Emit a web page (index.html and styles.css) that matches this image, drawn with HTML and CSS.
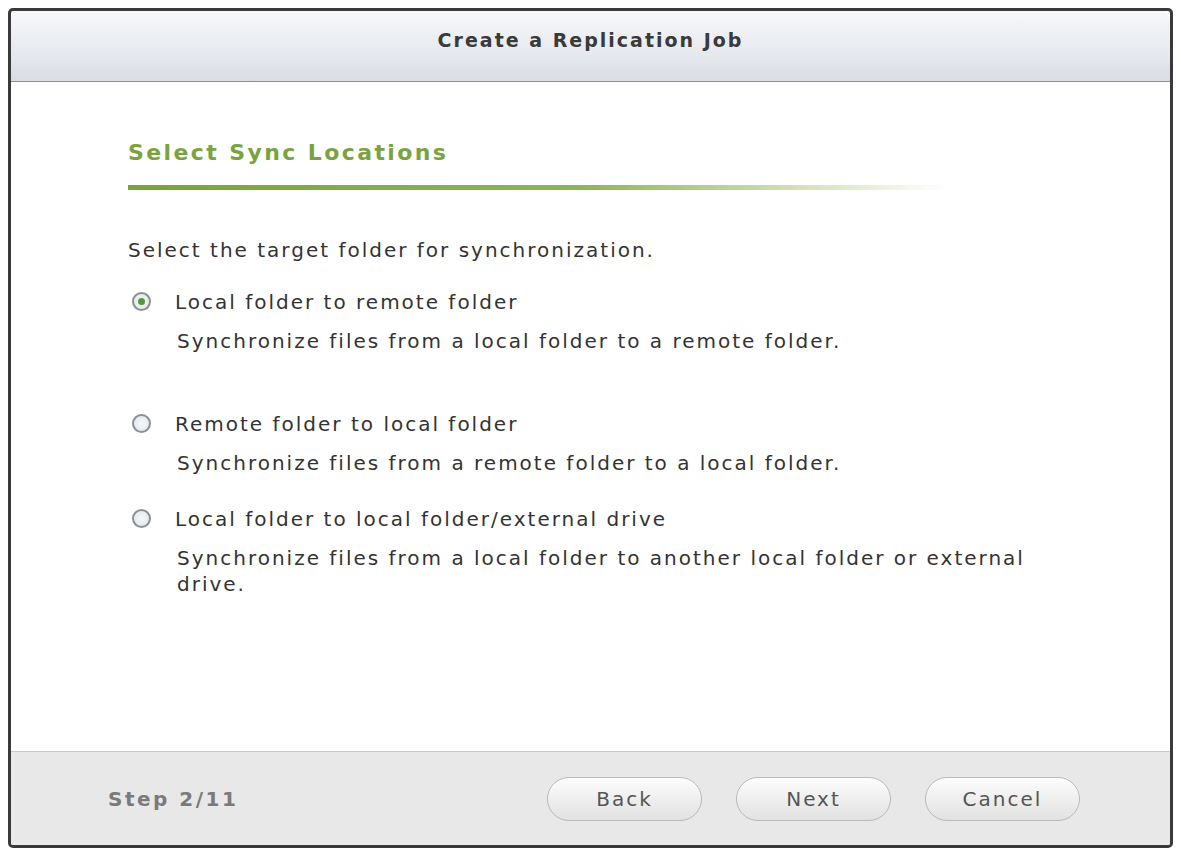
FILE: index.html
```html
<!DOCTYPE html>
<html lang="en">
<head>
    <meta charset="UTF-8">
    <title>Create a Replication Job</title>
    <link rel="stylesheet" href="styles.css">
</head>
<body>
    <div class="window">
        <div class="titlebar">Create a Replication Job</div>
        <div class="content">
            <h2 class="section-title">Select Sync Locations</h2>
            <div class="section-rule"></div>
            <p class="intro">Select the target folder for synchronization.</p>

            <div class="options">
                <label class="option first">
                    <span class="radio checked"></span>
                    <span class="option-text">
                        <span class="option-name">Local folder to remote folder</span>
                        <span class="option-desc">Synchronize files from a local folder to a remote folder.</span>
                    </span>
                </label>
                <label class="option">
                    <span class="radio"></span>
                    <span class="option-text">
                        <span class="option-name">Remote folder to local folder</span>
                        <span class="option-desc">Synchronize files from a remote folder to a local folder.</span>
                    </span>
                </label>
                <label class="option">
                    <span class="radio"></span>
                    <span class="option-text">
                        <span class="option-name">Local folder to local folder/external drive</span>
                        <span class="option-desc">Synchronize files from a local folder to another local folder or external drive.</span>
                    </span>
                </label>
            </div>
        </div>
        <div class="footer">
            <span class="step">Step 2/11</span>
            <div class="buttons">
                <button class="btn">Back</button>
                <button class="btn">Next</button>
                <button class="btn">Cancel</button>
            </div>
        </div>
    </div>
</body>
</html>
```

FILE: styles.css
```css
html, body { margin: 0; background: #fff; }
body { font-family: 'DejaVu Sans', Verdana, sans-serif; color: #333; }
.window { margin: 8px; width: 1159px; height: 834px; border: 3px solid #3a3a3a; border-radius: 5px; display: flex; flex-direction: column; overflow: hidden; background: #fff; }
.titlebar { height: 71px; box-sizing: border-box; padding-bottom: 12px; flex: none; display: flex; align-items: center; justify-content: center; font-weight: bold; font-size: 19px; letter-spacing: 2px; color: #3a3a3a; background: linear-gradient(to bottom, #f7f8fa, #e6e9ee 60%, #d9dde3); border-bottom: 1px solid #8e9296; border-radius: 8px 8px 0 0; }
.content { flex: 1; padding: 57px 0 0 117px; }
.section-title { margin: 0; font-size: 22px; letter-spacing: 2.4px; font-weight: bold; color: #7ba33d; line-height: 28px; }
.section-rule { margin-top: 18px; width: 820px; height: 5px; background: linear-gradient(to right, #7aa23a, #8fb35a 55%, rgba(160,195,110,0.4) 85%, rgba(255,255,255,0)); }
.intro { margin: 47px 0 0; font-size: 20px; letter-spacing: 2px; line-height: 26px; }
.options { margin-top: 26px; display: flex; flex-direction: column; gap: 30px; }
.option { display: flex; align-items: flex-start; gap: 24px; font-size: 20px; letter-spacing: 2px; }
.option.first { margin-bottom: 27px; }
.radio { flex: none; width: 19px; height: 19px; margin: 3px 0 0 4px; border: 2px solid #8a9096; border-radius: 50%; background: radial-gradient(circle, #f6f8fa, #e0e5e9); box-sizing: border-box; display: flex; align-items: center; justify-content: center; }
.radio.checked::after { content: ""; width: 7px; height: 7px; border-radius: 50%; background: #4f9a3a; }
.option-text { display: flex; flex-direction: column; width: 880px; }
.option-name { line-height: 26px; }
.option-desc { margin-top: 13px; margin-left: 2px; line-height: 26px; }
.footer { height: 93px; flex: none; border-top: 1px solid #c8c8c8; background: #e8e8e8; display: flex; align-items: center; padding: 0 90px 0 97px; justify-content: space-between; }
.step { font-weight: bold; font-size: 20px; letter-spacing: 2.5px; color: #7a7a7a; }
.buttons { display: flex; gap: 34px; }
.btn { width: 155px; height: 44px; border: 1px solid #b9b9b9; border-radius: 22px; background: linear-gradient(to bottom, #fdfdfd, #ececec 60%, #e2e2e2); font-family: 'DejaVu Sans', Verdana, sans-serif; font-size: 20px; letter-spacing: 2px; color: #555; box-shadow: inset 0 1px 0 #fff; }
```
